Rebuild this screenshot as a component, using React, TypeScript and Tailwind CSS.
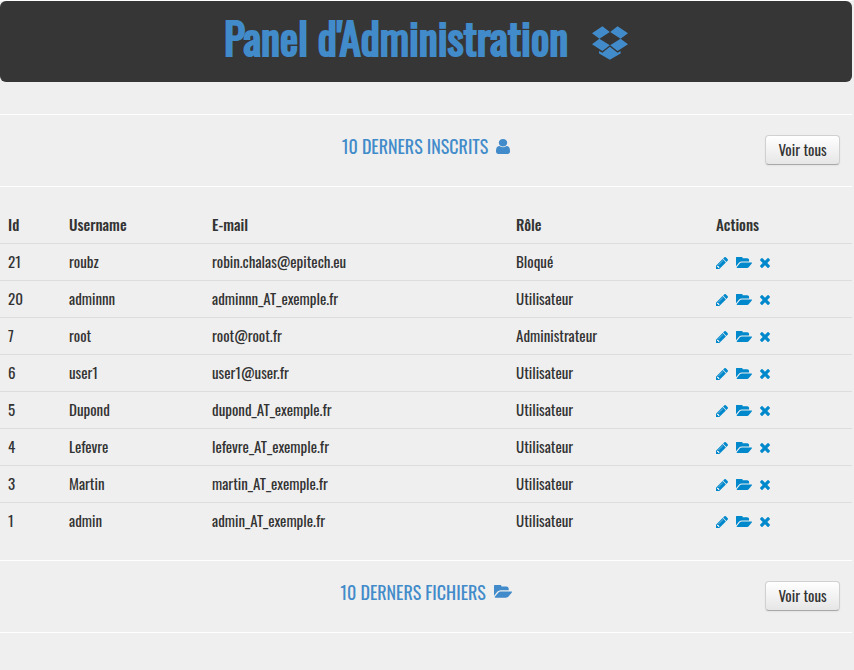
import type { ReactNode } from "react";

type User = { id: number; username: string; email: string; role: string };

const users: User[] = [
  { id: 21, username: "roubz", email: "robin.chalas@epitech.eu", role: "Bloqué" },
  { id: 20, username: "adminnn", email: "adminnn_AT_exemple.fr", role: "Utilisateur" },
  { id: 7, username: "root", email: "root@root.fr", role: "Administrateur" },
  { id: 6, username: "user1", email: "user1@user.fr", role: "Utilisateur" },
  { id: 5, username: "Dupond", email: "dupond_AT_exemple.fr", role: "Utilisateur" },
  { id: 4, username: "Lefevre", email: "lefevre_AT_exemple.fr", role: "Utilisateur" },
  { id: 3, username: "Martin", email: "martin_AT_exemple.fr", role: "Utilisateur" },
  { id: 1, username: "admin", email: "admin_AT_exemple.fr", role: "Utilisateur" },
];

function DropboxIcon() {
  return (
    <svg viewBox="484 80 107 100" className="h-[34px] w-9" fill="currentColor" aria-hidden="true">
      <path d="M484 101L515 80L537 97L506 117ZM591 101L560 80L538 97L569 117ZM484 134L506 117L537 137L515 154ZM591 134L569 117L538 137L560 154ZM505 154L515 159L537 141L560 159L569 154V161L537 180L505 161Z" />
    </svg>
  );
}

function UserIcon() {
  return (
    <svg viewBox="256 128 1280 1536" preserveAspectRatio="none" className="mt-0.5 h-[15px] w-[14px]" fill="currentColor" aria-hidden="true">
      <path d="M1536 1399q0 109-62.5 187t-150.5 78h-854q-88 0-150.5-78t-62.5-187q0-85 8.500-160.500t31.500-152 58.500-131 94-89 134.500-34.500q131 128 313 128t313-128q76 0 134.500 34.500t94 89 58.500 131 31.500 152 8.500 160.500zm-256-887q0 159-112.500 271.500t-271.500 112.500-271.500-112.500-112.500-271.500 112.500-271.500 271.500-112.500 271.500 112.500 112.500 271.500z" />
    </svg>
  );
}

function FolderIcon({ className }: { className: string }) {
  return (
    <svg viewBox="64 256 1879 1280" className={className} fill="currentColor" aria-hidden="true">
      <path d="M1943 952q0 31-31 66l-336 396q-43 51-120.500 86.500t-143.500 35.500h-1088q-34 0-60.500-13t-26.500-43q0-31 31-66l336-396q43-51 120.500-86.500t143.500-35.500h1088q34 0 60.500 13t26.500 43zm-343-344v160h-832q-94 0-197 47.500t-164 119.500l-337 396-5 6q0-4-.5-12.500t-.5-12.500v-960q0-92 66-158t158-66h320q92 0 158 66t66 158v32h544q92 0 158 66t66 158z" />
    </svg>
  );
}

function PencilIcon() {
  return (
    <svg viewBox="128 149 1515 1515" className="size-3" fill="currentColor" aria-hidden="true">
      <path d="M491 1536l91-91-235-235-91 91v107h128v128h107zm523-928q0-22-22-22-10 0-17 7l-542 542q-7 7-7 17 0 22 22 22 10 0 17-7l542-542q7-7 7-17zm-54-192l416 416-832 832h-416v-416zm683 96q0 53-37 90l-166 166-416-416 166-165q36-38 90-38 53 0 91 38l235 234q37 39 37 91z" />
    </svg>
  );
}

function CrossIcon() {
  return (
    <svg viewBox="302 366 1188 1188" className="size-[10px]" fill="currentColor" aria-hidden="true">
      <path d="M1490 1322q0 40-28 68l-136 136q-28 28-68 28t-68-28l-294-294-294 294q-28 28-68 28t-68-28l-136-136q-28-28-28-68t28-68l294-294-294-294q-28-28-28-68t28-68l136-136q28-28 68-28t68 28l294 294 294-294q28-28 68-28t68 28l136 136q28 28 28 68t-28 68l-294 294 294 294q28 28 28 68z" />
    </svg>
  );
}

function SectionBar({ title, icon }: { title: string; icon: ReactNode }) {
  return (
    <div className="grid h-[73px] grid-cols-[1fr_auto_1fr] items-center border-y border-white pr-3 pb-0.5">
      <h2 className="col-start-2 flex items-center gap-2 pb-2 pl-3 text-lg leading-6 text-[#428bca]">
        {title}
        {icon}
      </h2>
      <button
        type="button"
        className="h-[30px] w-[75px] justify-self-end rounded border border-[#d0d0d0] border-b-[#a8a8a8] bg-linear-to-b from-white to-[#e6e6e6] pb-0.5 leading-5 whitespace-nowrap text-[#333333] shadow-xs"
      >
        Voir tous
      </button>
    </div>
  );
}

export default function App() {
  return (
    <div className="min-h-screen bg-[#efefef] pr-0.5 font-['Oswald','Liberation_Sans_Narrow','Liberation_Sans',sans-serif] text-[15px] text-[#333333]">
      <header className="border-t border-white">
        <div className="flex h-[81px] items-center justify-center gap-6 rounded-md bg-[#363636] pt-0.5 text-[#428bca]">
          <h1 className="pb-3 text-[43px] leading-12 [-webkit-text-stroke:2px_#428bca]">Panel d'Administration</h1>
          <DropboxIcon />
        </div>
      </header>
      <main className="pt-8">
        <SectionBar title="10 DERNERS INSCRITS" icon={<UserIcon />} />
        <table className="mt-5 w-full table-fixed text-left leading-5">
          <colgroup>
            <col className="w-[61px]" />
            <col className="w-[143px]" />
            <col className="w-[304px]" />
            <col className="w-[200px]" />
            <col />
          </colgroup>
          <thead>
            <tr className="h-9">
              <th className="px-2 pb-0.5 font-medium">Id</th>
              <th className="px-2 pb-0.5 font-medium">Username</th>
              <th className="px-2 pb-0.5 font-medium">E-mail</th>
              <th className="px-2 pb-0.5 font-medium">Rôle</th>
              <th className="px-2 pb-0.5 font-medium">Actions</th>
            </tr>
          </thead>
          <tbody>
            {users.map((u) => (
              <tr key={u.id} className="h-[37px] border-t border-[#dddddd]">
                <td className="px-2 pb-0.5">{u.id}</td>
                <td className="px-2 pb-0.5">{u.username}</td>
                <td className="px-2 pb-0.5">{u.email}</td>
                <td className="px-2 pb-0.5">{u.role}</td>
                <td className="px-2">
                  <div className="flex items-center gap-2 pt-0.5 text-[#0088cc]">
                    <a href="#edit" aria-label={`Modifier ${u.username}`}>
                      <PencilIcon />
                    </a>
                    <a href="#files" aria-label={`Fichiers de ${u.username}`}>
                      <FolderIcon className="h-[11px] w-4" />
                    </a>
                    <a href="#delete" aria-label={`Supprimer ${u.username}`}>
                      <CrossIcon />
                    </a>
                  </div>
                </td>
              </tr>
            ))}
          </tbody>
        </table>
        <div className="mt-[21px]">
          <SectionBar title="10 DERNERS FICHIERS" icon={<FolderIcon className="h-[13px] w-[18px]" />} />
        </div>
      </main>
    </div>
  );
}
